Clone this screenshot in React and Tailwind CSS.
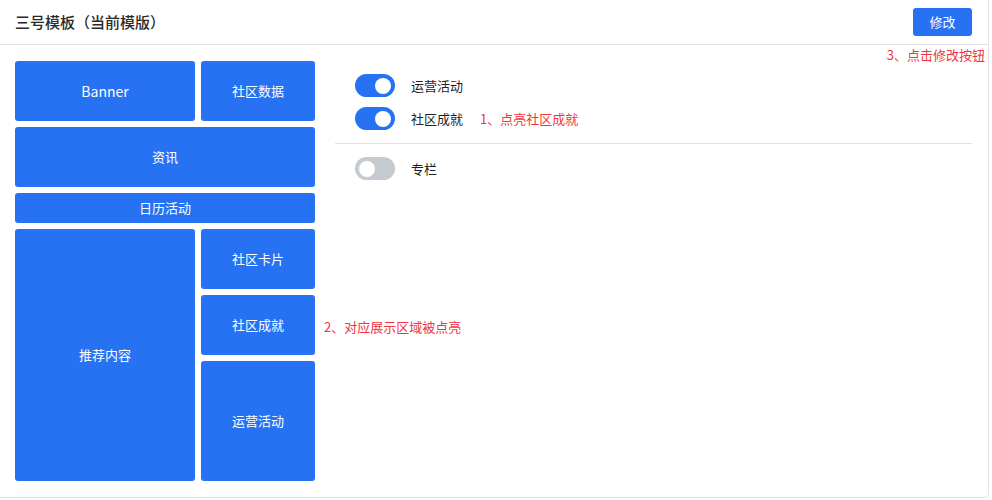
import { useState } from "react";

const FONT = { fontFamily: '"Noto Sans CJK SC", "Noto Sans", sans-serif' };

function Block({ className = "", children }) {
  return (
    <div className={"flex items-center justify-center rounded-[3px] bg-[#2672f3] text-[13px] text-white " + className}>
      {children}
    </div>
  );
}

function Toggle({ on, onClick }) {
  return (
    <button
      onClick={onClick}
      className={"relative h-[23px] w-[40px] shrink-0 rounded-full transition-colors " + (on ? "bg-[#2672f3]" : "bg-[#c5c9d0]")}
    >
      <span
        className={"absolute top-[3.5px] h-[16px] w-[16px] rounded-full bg-white transition-all " + (on ? "left-[20px]" : "left-[4px]")}
      />
    </button>
  );
}

export default function App() {
  const [toggles, setToggles] = useState({ ops: true, achieve: true, column: false });
  const flip = (k) => setToggles({ ...toggles, [k]: !toggles[k] });

  return (
    <div className="h-[500px] w-[992px] bg-white" style={FONT}>
      <div className="relative h-[498px] w-[989px] rounded-br-[4px] border-r border-b border-[#e1e3e6]">
        {/* Header */}
        <div className="flex h-[45px] items-center justify-between border-b border-[#e1e3e6] pl-[15px] pr-[16px]">
          <span className="text-[15px] font-medium text-[#2a2a2a]">三号模板（当前模版）</span>
          <button className="h-[28px] w-[59px] rounded-[3px] bg-[#2672f3] text-[13px] text-white">修改</button>
        </div>
        <span className="absolute right-[3px] top-[45px] text-[13px] text-[#f2343e]">3、点击修改按钮</span>

        {/* Body */}
        <div className="flex gap-[20px] pl-[15px] pr-[16px] pt-[16px]">
          <div className="flex w-[300px] shrink-0 flex-col gap-[6px]">
            <div className="flex gap-[6px]">
              <Block className="h-[60px] w-[180px] text-[14px]">Banner</Block>
              <Block className="h-[60px] flex-1">社区数据</Block>
            </div>
            <Block className="h-[60px]">资讯</Block>
            <Block className="h-[30px]">日历活动</Block>
            <div className="flex gap-[6px]">
              <Block className="h-[252px] w-[180px]">推荐内容</Block>
              <div className="flex flex-1 flex-col gap-[6px]">
                <Block className="h-[60px]">社区卡片</Block>
                <div className="relative">
                  <Block className="h-[60px]">社区成就</Block>
                  <span className="absolute left-[123px] top-[22px] whitespace-nowrap text-[13px] text-[#f2343e]">
                    2、对应展示区域被点亮
                  </span>
                </div>
                <Block className="h-[120px]">运营活动</Block>
              </div>
            </div>
          </div>

          <div className="flex-1 pt-[13px]">
            <div className="flex flex-col gap-[10px] pl-[20px]">
              <div className="flex items-center gap-[16px]">
                <Toggle on={toggles.ops} onClick={() => flip("ops")} />
                <span className="text-[13px] text-[#1f1f1f]">运营活动</span>
              </div>
              <div className="flex items-center gap-[16px]">
                <Toggle on={toggles.achieve} onClick={() => flip("achieve")} />
                <span className="text-[13px] text-[#1f1f1f]">社区成就</span>
                <span className="ml-[1px] text-[13px] text-[#f2343e]">1、点亮社区成就</span>
              </div>
            </div>
            <div className="my-[13px] border-t border-[#e1e3e6]" />
            <div className="flex items-center gap-[16px] pl-[20px]">
              <Toggle on={toggles.column} onClick={() => flip("column")} />
              <span className="text-[13px] text-[#1f1f1f]">专栏</span>
            </div>
          </div>
        </div>
      </div>
    </div>
  );
}
